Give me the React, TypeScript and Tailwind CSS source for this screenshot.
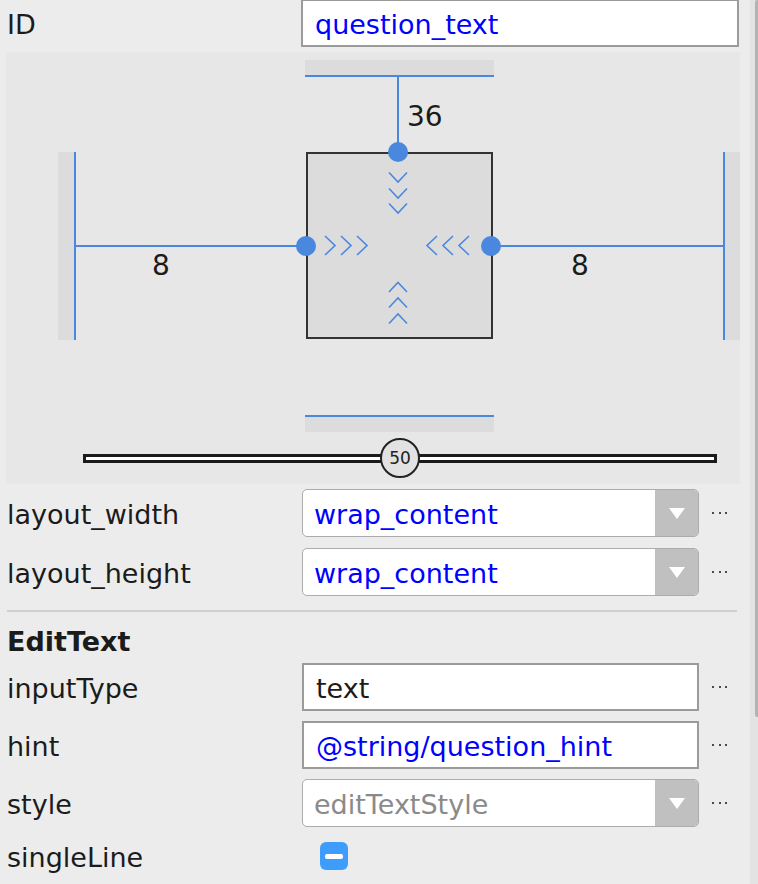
import React from "react";

const BLUE = "#4a87de";

function Dots() {
  return (
    <div className="ml-[13px] flex items-center gap-[4.5px]">
      <span className="h-[2px] w-[2px] bg-[#4a4a4a]" />
      <span className="h-[2px] w-[2px] bg-[#4a4a4a]" />
      <span className="h-[2px] w-[2px] bg-[#4a4a4a]" />
    </div>
  );
}

function Dropdown({ value, muted }: { value: string; muted?: boolean }) {
  return (
    <div className="flex h-[48px] w-[397px] overflow-hidden rounded-[5px] border-[1.5px] border-[#acacac] bg-white">
      <div className={`flex flex-1 items-center pl-[11px] pt-[2px] ${muted ? "text-[#8a8a8a]" : "text-[#0000ff]"}`}>
        {value}
      </div>
      <div className="flex w-[43px] items-center justify-center bg-[#c0c0c0]">
        <svg width="16" height="11" viewBox="0 0 16 11">
          <polygon points="0,0 16,0 8,11" fill="#ffffff" />
        </svg>
      </div>
    </div>
  );
}

function TextBox({ value, blue, wide }: { value: string; blue?: boolean; wide?: boolean }) {
  return (
    <div
      className={`flex h-[48px] items-center border-2 border-[#9b9b9b] bg-white pl-[12px] pt-[2px] ${
        wide ? "w-[438px]" : "w-[397px]"
      } ${blue ? "text-[#0000ff]" : "text-[#1b1b1b]"}`}
    >
      {value}
    </div>
  );
}

function Row({ label, children }: { label: string; children?: React.ReactNode }) {
  return (
    <div className="flex items-center">
      <div className="w-[295px] shrink-0 pt-[3px]">{label}</div>
      {children}
    </div>
  );
}

function Chevron({ d }: { d: string }) {
  return <path d={d} fill="none" stroke={BLUE} strokeWidth="1.6" />;
}

function Diagram() {
  const downs = [130, 146, 161];
  const ups = [240, 255.5, 271.5];
  const rights = [319, 335, 351];
  const lefts = [431, 447, 463];
  return (
    <svg width="734" height="388" viewBox="0 0 734 388" className="block">
      {/* top / bottom anchors */}
      <rect x="299" y="8" width="189" height="16" fill="#dcdcdc" />
      <rect x="299" y="23" width="189" height="2" fill={BLUE} />
      <rect x="299" y="364" width="189" height="16" fill="#dcdcdc" />
      <rect x="299" y="363" width="189" height="2" fill={BLUE} />

      {/* side anchors */}
      <rect x="52" y="100" width="17" height="188" fill="#dcdcdc" />
      <rect x="68" y="100" width="2" height="188" fill={BLUE} />
      <rect x="718" y="100" width="16" height="188" fill="#dcdcdc" />
      <rect x="717" y="100" width="2" height="188" fill={BLUE} />

      {/* constraint lines */}
      <rect x="391" y="24" width="2" height="76" fill={BLUE} />
      <rect x="69" y="193" width="231" height="2" fill={BLUE} />
      <rect x="485" y="193" width="233" height="2" fill={BLUE} />

      {/* widget box */}
      <rect x="301" y="101" width="185" height="185" fill="#dcdcdc" stroke="#333333" strokeWidth="2" />

      {downs.map((y) => (
        <Chevron key={`d${y}`} d={`M383 ${y - 9.5} L392 ${y} L401 ${y - 9.5}`} />
      ))}
      {ups.map((y) => (
        <Chevron key={`u${y}`} d={`M383 ${y} L392 ${y - 9.5} L401 ${y}`} />
      ))}
      {rights.map((x) => (
        <Chevron key={`r${x}`} d={`M${x} 184 L${x + 10} 193.5 L${x} 203`} />
      ))}
      {lefts.map((x) => (
        <Chevron key={`l${x}`} d={`M${x} 184 L${x - 10} 193.5 L${x} 203`} />
      ))}

      <circle cx="392" cy="100" r="10" fill={BLUE} />
      <circle cx="300" cy="194" r="10" fill={BLUE} />
      <circle cx="485" cy="194" r="10" fill={BLUE} />

      <text x="401" y="74" fontSize="28" fill="#1b1b1b" fontFamily="DejaVu Sans, sans-serif">36</text>
      <text x="146" y="223" fontSize="28" fill="#1b1b1b" fontFamily="DejaVu Sans, sans-serif">8</text>
      <text x="565" y="223" fontSize="28" fill="#1b1b1b" fontFamily="DejaVu Sans, sans-serif">8</text>
    </svg>
  );
}

function Slider() {
  return (
    <div className="flex h-[36px] items-center">
      <div className="relative ml-[77px] h-[9px] w-[634px] border-[3px] border-[#1a1a1a] bg-white">
        <div className="absolute left-1/2 top-1/2 flex h-[40px] w-[40px] -translate-x-1/2 -translate-y-1/2 items-center justify-center rounded-full border-2 border-[#222] bg-[#e2e2e2] text-[17px] text-[#222]">
          50
        </div>
      </div>
    </div>
  );
}

export default function App() {
  return (
    <div className="flex h-[884px] w-[758px] overflow-hidden bg-[#ececec] font-['DejaVu_Sans',sans-serif] text-[27px] leading-none text-[#1b1b1b]">
      <div className="w-[750px] shrink-0 pl-[7px]">
        {/* ID */}
        <div className="flex h-[46px] items-center">
          <div className="w-[294px] shrink-0 pt-[3px]">ID</div>
          <TextBox value="question_text" blue wide />
        </div>

        {/* constraint editor */}
        <div className="-ml-[1px] mt-[6px] flex h-[432px] w-[734px] flex-col bg-[#e7e7e7]">
          <Diagram />
          <Slider />
        </div>

        <div className="mt-[5px] flex flex-col gap-[11px]">
          <Row label="layout_width">
            <Dropdown value="wrap_content" />
            <Dots />
          </Row>
          <Row label="layout_height">
            <Dropdown value="wrap_content" />
            <Dots />
          </Row>
        </div>

        <div className="mt-[14px] h-[2px] w-[730px] bg-[#d0d0d0]" />

        <div className="flex h-[51px] items-center pt-[8px] font-bold">EditText</div>

        <div className="flex flex-col gap-[10px]">
          <Row label="inputType">
            <TextBox value="text" />
            <Dots />
          </Row>
          <Row label="hint">
            <TextBox value="@string/question_hint" blue />
            <Dots />
          </Row>
          <Row label="style">
            <Dropdown value="editTextStyle" muted />
            <Dots />
          </Row>
        </div>

        <div className="mt-[10px] flex h-[38px] items-center">
          <div className="w-[313px] shrink-0 pt-[3px]">singleLine</div>
          <div className="flex h-[28px] w-[28px] items-center justify-center rounded-[6px] bg-[#3e9cfd]">
            <div className="h-[5px] w-[18px] rounded-[2px] bg-white" />
          </div>
        </div>
      </div>

      {/* scrollbar */}
      <div className="flex w-[8px] justify-end bg-[#e3e3e3]">
        <div className="h-[717px] w-[3px] rounded-l-[2px] bg-[#b3b3b3]" />
      </div>
    </div>
  );
}
